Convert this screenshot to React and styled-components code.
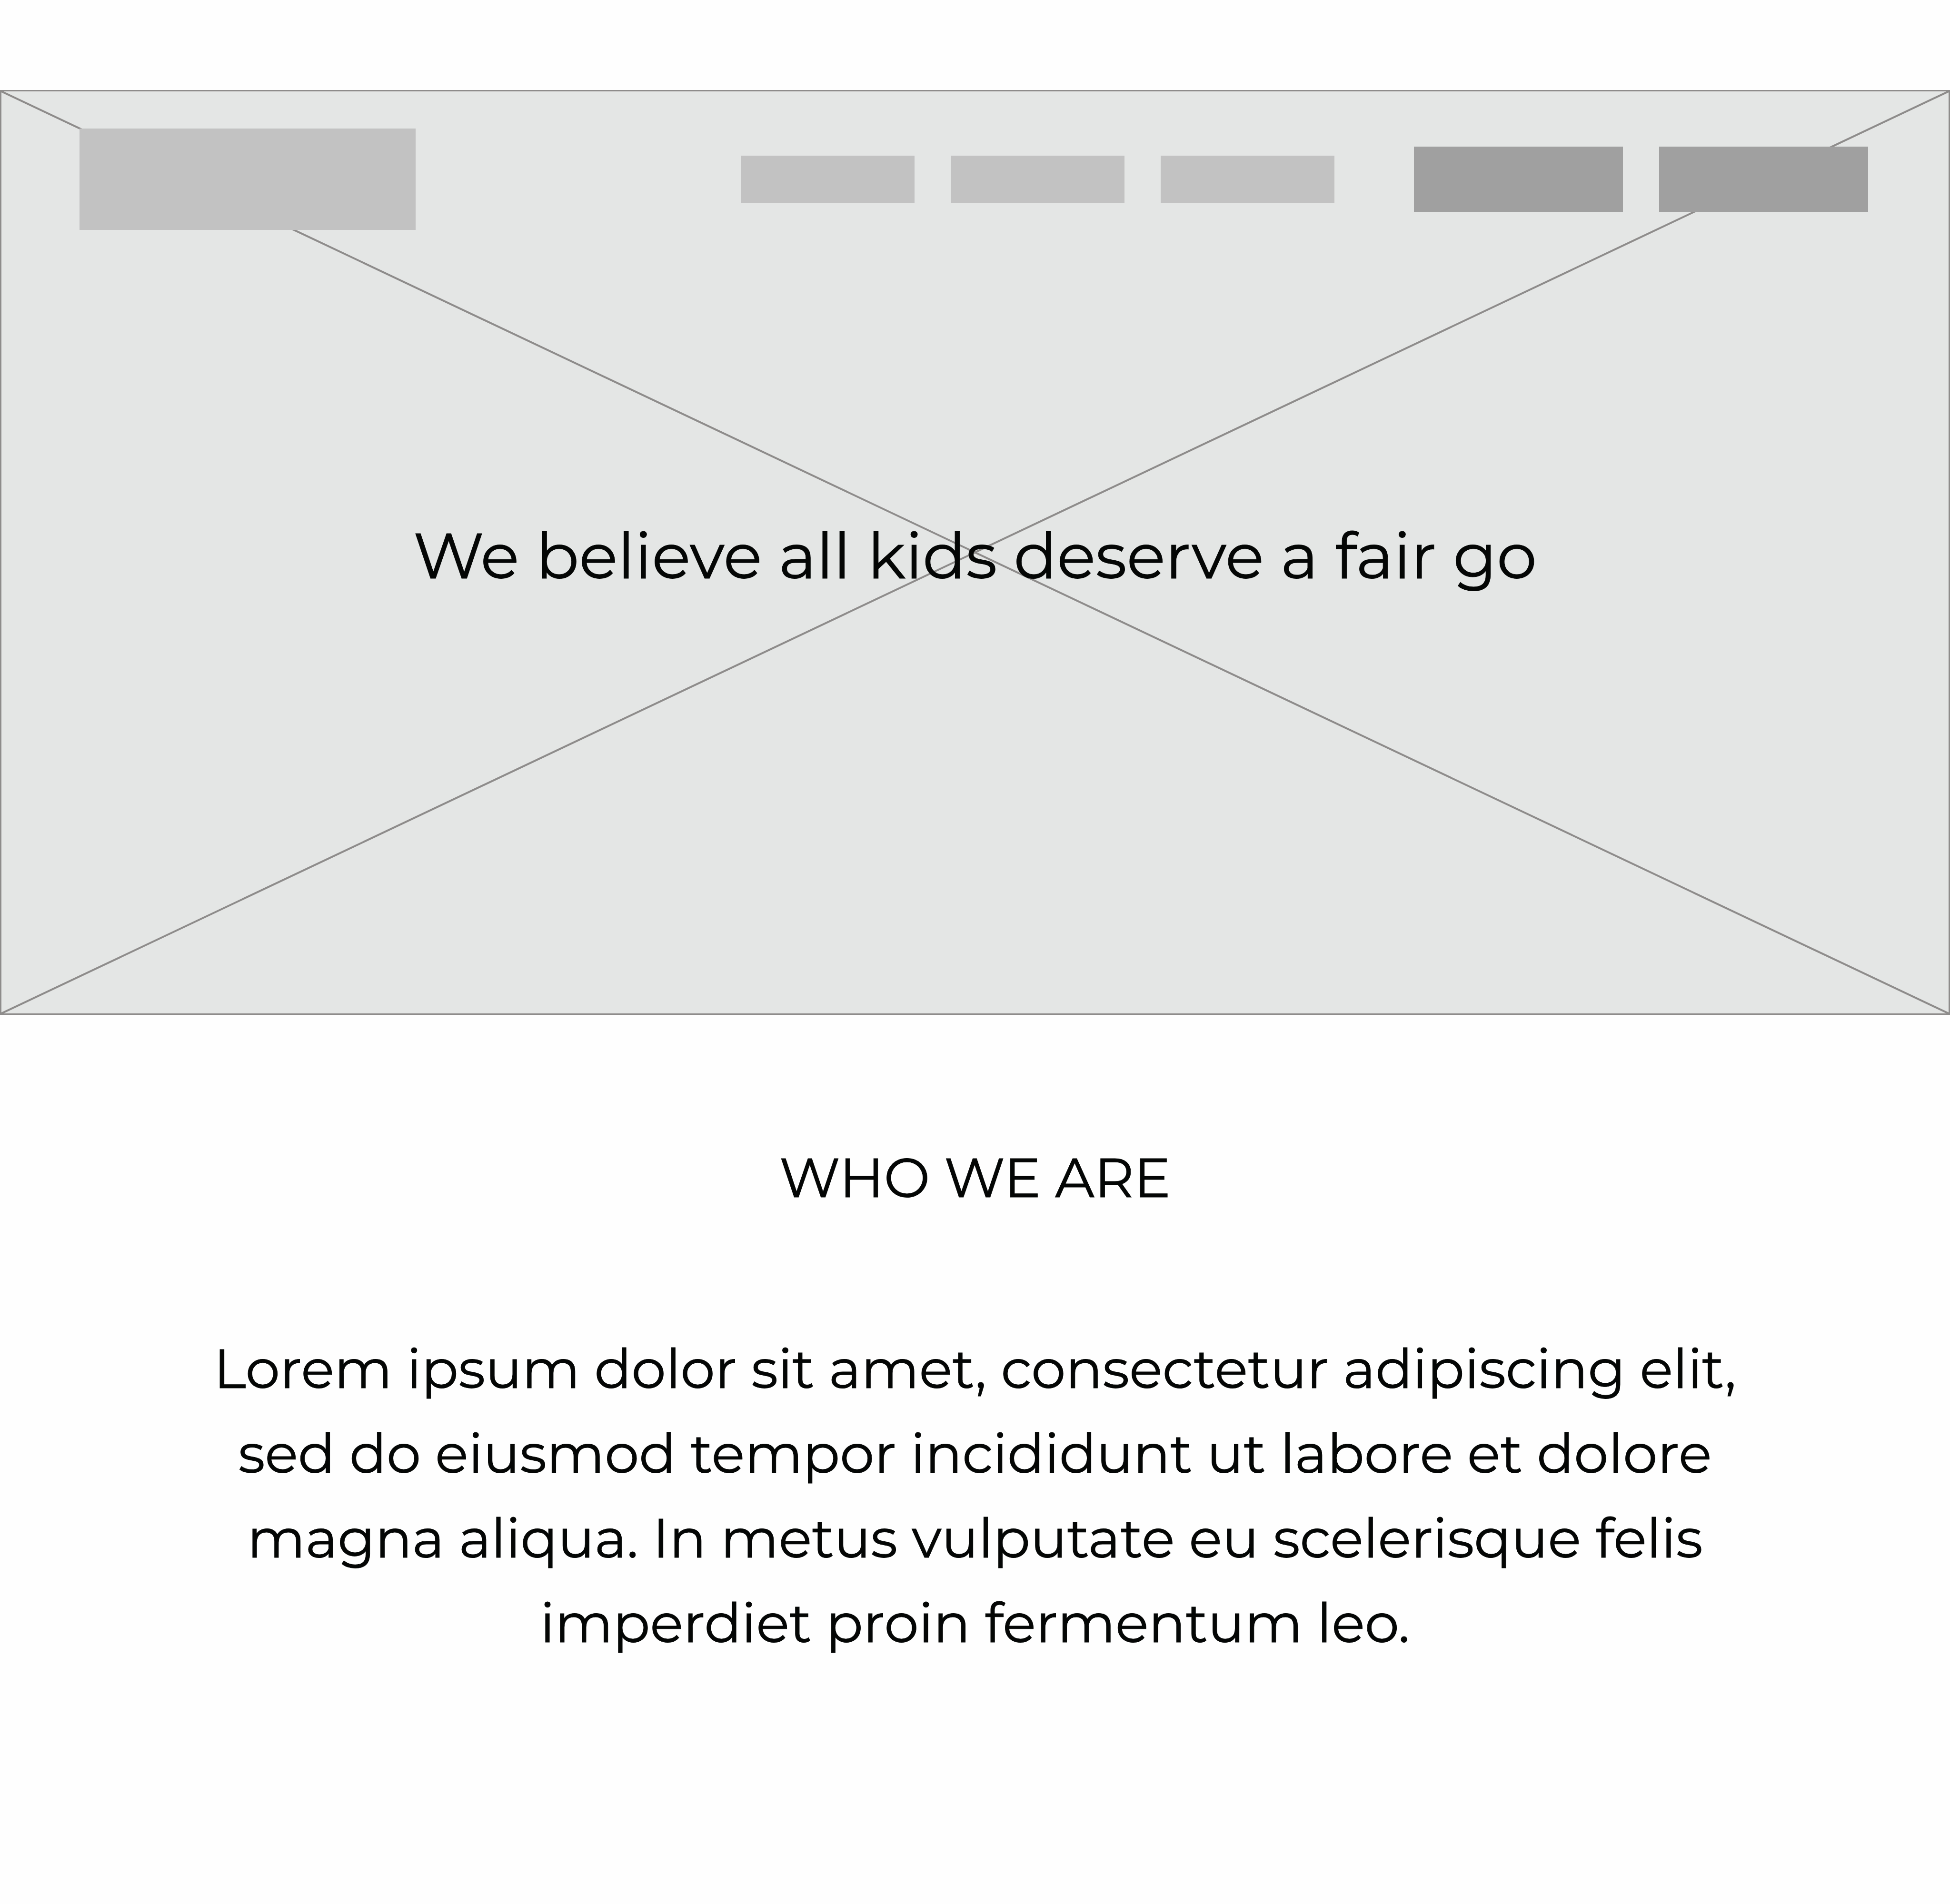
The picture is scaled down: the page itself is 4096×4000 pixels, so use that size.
import React from "react";
import styled, { createGlobalStyle } from "styled-components";

const GlobalStyle = createGlobalStyle`
  *, *::before, *::after { box-sizing: border-box; }
  body {
    margin: 0;
    background: #fefefe;
    color: #040605;
    font-family: Montserrat, Inter, sans-serif;
    -webkit-text-stroke: 1px currentColor;
  }
`;

const Page = styled.div`
  padding: 189px 0 440px;
`;

const Hero = styled.section`
  position: relative;
  display: flex;
  flex-direction: column;
  min-height: 1943px;
  border: 3px solid #8e8c8b;
  background: #e4e6e5;
`;

const Cross = styled.svg`
  position: absolute;
  inset: 0;
  width: 100%;
  height: 100%;

  line {
    stroke: #8e8c8b;
    stroke-width: 4px;
    vector-effect: non-scaling-stroke;
  }
`;

const TopBar = styled.header`
  position: relative;
  display: flex;
  align-items: center;
  gap: 167px;
  padding: 78px 169px 0 164px;
`;

const Logo = styled.a`
  width: 706px;
  height: 213px;
  margin-right: auto;
  background: #c2c2c2;
`;

const Group = styled.div`
  display: flex;
  align-items: center;
  gap: 76px;
`;

const NavLink = styled.a`
  width: 365px;
  height: 99px;
  background: #c2c2c2;
`;

const Action = styled.button`
  width: 439px;
  height: 137px;
  padding: 0;
  border: 0;
  background: #a0a0a0;
`;

const Title = styled.h1`
  position: relative;
  margin: 595px 0 0;
  font-size: 134px;
  font-weight: 400;
  line-height: 178px;
  text-align: center;
`;

const About = styled.section`
  padding: 253px 400px 0;
  text-align: center;
`;

const Heading = styled.h2`
  margin: 0;
  font-size: 115px;
  font-weight: 400;
  line-height: 178px;
`;

const Copy = styled.p`
  max-width: 3280px;
  margin: 223px auto 0;
  font-size: 115px;
  line-height: 178px;
`;

export default function App() {
  return (
    <Page>
      <GlobalStyle />
      <Hero>
        <Cross viewBox="0 0 100 100" preserveAspectRatio="none" aria-hidden="true">
          <line x1="0" y1="0" x2="100" y2="100" />
          <line x1="100" y1="0" x2="0" y2="100" />
        </Cross>
        <TopBar>
          <Logo href="#" aria-label="Home" />
          <Group as="nav">
            <NavLink href="#" aria-label="Link 1" />
            <NavLink href="#" aria-label="Link 2" />
            <NavLink href="#" aria-label="Link 3" />
          </Group>
          <Group>
            <Action type="button" aria-label="Action 1" />
            <Action type="button" aria-label="Action 2" />
          </Group>
        </TopBar>
        <Title>We believe all kids deserve a fair go</Title>
      </Hero>
      <About>
        <Heading>WHO WE ARE</Heading>
        <Copy>
          Lorem ipsum dolor sit amet, consectetur adipiscing elit, sed do
          eiusmod tempor incididunt ut labore et dolore magna aliqua. In metus
          vulputate eu scelerisque felis imperdiet proin fermentum leo.
        </Copy>
      </About>
    </Page>
  );
}
